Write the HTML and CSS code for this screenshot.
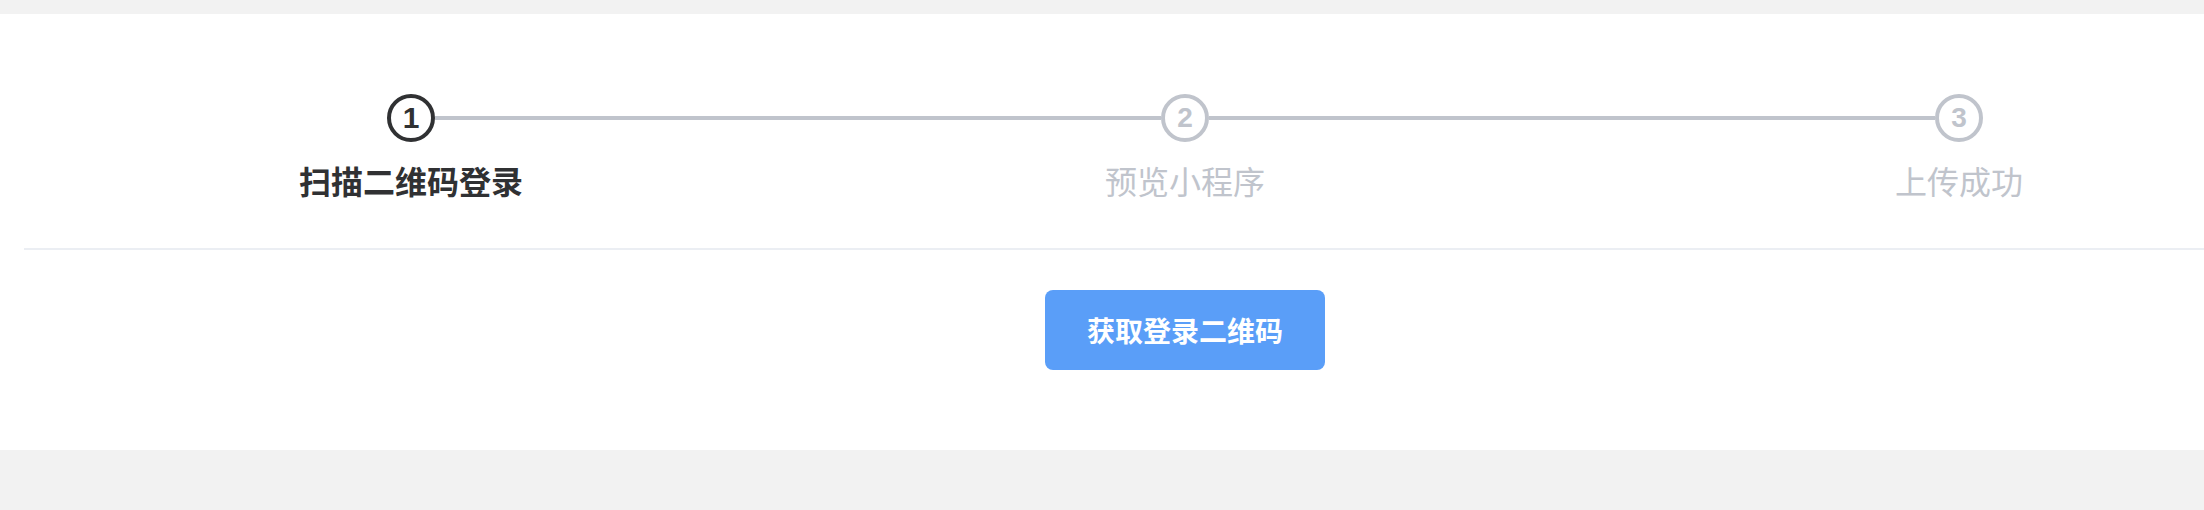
FILE: index.html
```html
<!DOCTYPE html>
<html lang="zh-CN">
<head>
  <meta charset="utf-8">
  <title>上传小程序</title>
  <link rel="stylesheet" href="styles.css">
</head>
<body>
  <div class="page">
    <div class="panel">
      <div class="panel-inner">
        <div class="steps">
          <div class="step is-process is-first">
            <div class="step-head">
              <span class="step-line"></span>
              <span class="step-icon">1</span>
              <span class="step-line"></span>
            </div>
            <div class="step-title">扫描二维码登录</div>
          </div>
          <div class="step is-wait">
            <div class="step-head">
              <span class="step-line"></span>
              <span class="step-icon">2</span>
              <span class="step-line"></span>
            </div>
            <div class="step-title">预览小程序</div>
          </div>
          <div class="step is-wait is-last">
            <div class="step-head">
              <span class="step-line"></span>
              <span class="step-icon">3</span>
              <span class="step-line"></span>
            </div>
            <div class="step-title">上传成功</div>
          </div>
        </div>

        <div class="divider"></div>

        <div class="actions">
          <button class="btn-primary" type="button">获取登录二维码</button>
        </div>
      </div>
    </div>
  </div>
</body>
</html>
```

FILE: styles.css
```css
html, body {
  margin: 0;
  padding: 0;
}

body {
  background-color: #f2f2f2;
  font-family: "Helvetica Neue", "Liberation Sans", "Noto Sans CJK SC", sans-serif;
  overflow: hidden;
}

.page {
  padding-top: 14px;
}

.panel {
  background-color: #ffffff;
  height: 436px;
  padding-left: 24px;
  overflow: hidden;
}

/* the panel is wider than the window, only its left part shows */
.panel-inner {
  width: 2322px;
}

.steps {
  display: flex;
  padding-top: 80px;
}

.step {
  flex: 0 0 33.3333%;
  display: flex;
  flex-direction: column;
  align-items: center;
}

.step-head {
  display: flex;
  align-items: center;
  width: 100%;
}

.step-line {
  flex: 1;
  height: 4px;
  background-color: #c0c4cc;
}

.is-first .step-head .step-line:first-child,
.is-last .step-head .step-line:last-child {
  background-color: transparent;
}

.step-icon {
  display: flex;
  justify-content: center;
  align-items: center;
  width: 48px;
  height: 48px;
  box-sizing: border-box;
  border: 4px solid #c0c4cc;
  border-radius: 50%;
  background-color: #ffffff;
  color: #c0c4cc;
  font-family: "Liberation Sans", sans-serif;
  font-size: 28px;
  font-weight: 700;
}

.step-title {
  font-family: "Noto Sans CJK SC", sans-serif;
  font-size: 32px;
  line-height: 76px;
  color: #c0c4cc;
}

.is-process .step-icon {
  border-color: #303133;
  color: #303133;
  font-size: 30px;
}

.is-process .step-title {
  color: #303133;
  font-weight: 700;
}

.divider {
  height: 2px;
  background-color: #ebeef3;
  margin-top: 30px;
}

.actions {
  display: flex;
  justify-content: center;
  padding-top: 40px;
}

.btn-primary {
  width: 280px;
  height: 80px;
  border: none;
  border-radius: 8px;
  background-color: #5a9ef8;
  color: #ffffff;
  font-family: "Noto Sans CJK SC", sans-serif;
  font-size: 28px;
  font-weight: 700;
  cursor: pointer;
}
```
